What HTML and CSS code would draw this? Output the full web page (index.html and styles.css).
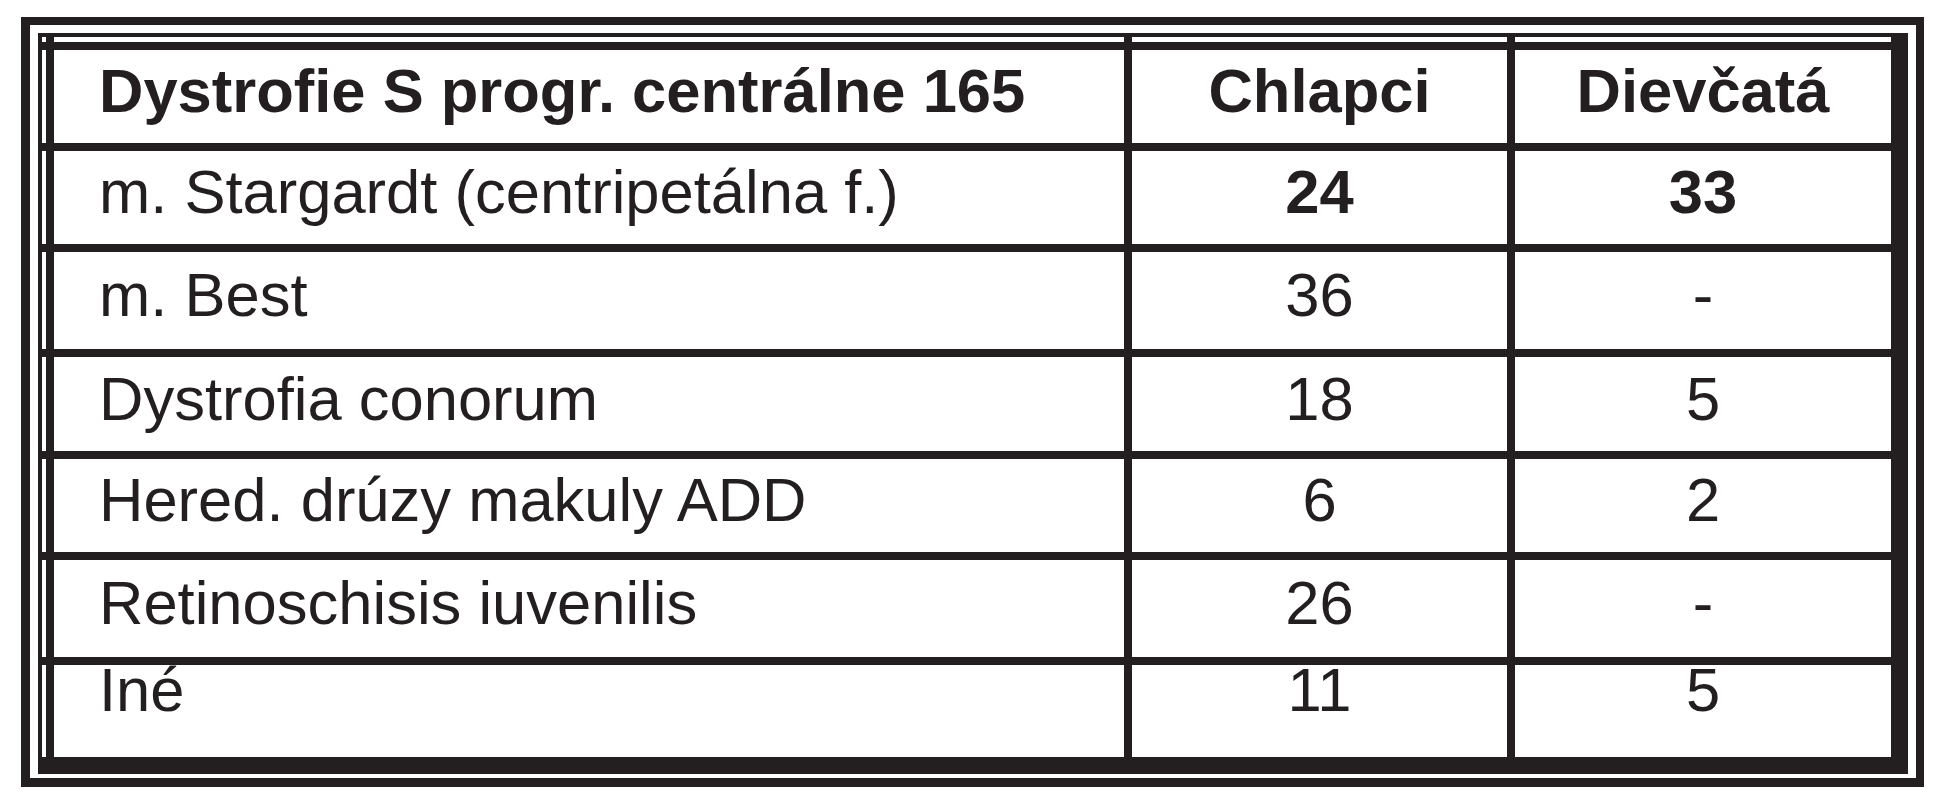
FILE: index.html
```html
<!DOCTYPE html>
<html lang="sk">
<head>
<meta charset="utf-8">
<title>Dystrofie</title>
<link rel="stylesheet" href="styles.css">
</head>
<body>
<div class="frame">
  <div class="grid" role="table">
    <span class="pad"></span><span class="pad"></span><span class="pad"></span><span class="pad"></span>

    <span class="pad"></span>
    <div class="cell label head">Dystrofie S progr. centrálne 165</div>
    <div class="cell num head">Chlapci</div>
    <div class="cell num head">Dievčatá</div>

    <span class="pad"></span>
    <div class="cell label">m. Stargardt (centripetálna f.)</div>
    <div class="cell num strong">24</div>
    <div class="cell num strong">33</div>

    <span class="pad"></span>
    <div class="cell label">m. Best</div>
    <div class="cell num">36</div>
    <div class="cell num">-</div>

    <span class="pad"></span>
    <div class="cell label">Dystrofia conorum</div>
    <div class="cell num">18</div>
    <div class="cell num">5</div>

    <span class="pad"></span>
    <div class="cell label">Hered. drúzy makuly ADD</div>
    <div class="cell num">6</div>
    <div class="cell num">2</div>

    <span class="pad"></span>
    <div class="cell label">Retinoschisis iuvenilis</div>
    <div class="cell num">26</div>
    <div class="cell num">-</div>

    <span class="pad"></span>
    <div class="cell label end">Iné</div>
    <div class="cell num end">11</div>
    <div class="cell num end">5</div>
  </div>
</div>
</body>
</html>
```

FILE: styles.css
```css
html, body {
  margin: 0;
  background: #ffffff;
}

body {
  padding: 17px 0 0 21px;
  font-family: "Liberation Sans", Arial, sans-serif;
  color: #231f20;
}

.frame {
  width: max-content;
  border-style: solid;
  border-color: #231f20;
  border-width: 8px 8px 9px 9px;
  padding: 8px 8px 4px 8px;
  background: #ffffff;
}

.grid {
  display: grid;
  grid-template-columns: 4px 1070px 375px 376px;
  grid-template-rows: 5px 93px 93px 97px 94px 93px 97px 92px;
  gap: 8px;
  background: #231f20;
  border-style: solid;
  border-color: #231f20;
  border-width: 4px 17px 17px 4px;
}

.pad {
  background: #ffffff;
}

.cell {
  background: #ffffff;
  display: flex;
  align-items: center;
  padding: 0 0 11px 0;
  font-size: 61.5px;
  line-height: 1;
  white-space: nowrap;
}

.label {
  padding-left: 45px;
}

.num {
  justify-content: center;
}

.head,
.strong {
  font-weight: bold;
}

.end {
  align-items: flex-start;
  padding-bottom: 0;
  line-height: 0.8;
}
```
